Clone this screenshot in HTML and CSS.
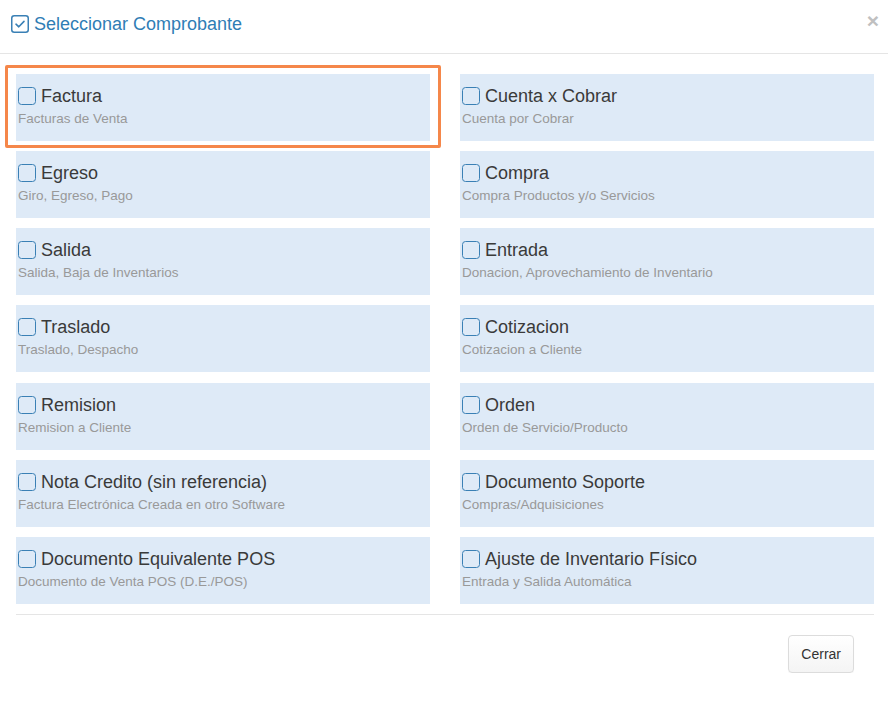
FILE: index.html
```html
<!DOCTYPE html>
<html lang="es">
<head>
<meta charset="utf-8">
<title>Seleccionar Comprobante</title>
<link rel="stylesheet" href="styles.css">
</head>
<body>
<div class="modal">
  <div class="modal-header">
    <h4 class="modal-title">
      <svg class="title-icon" width="18" height="18" viewBox="0 0 18 18" aria-hidden="true">
        <rect x="0.75" y="0.75" width="16.5" height="16.5" rx="2.5" fill="none" stroke="#3a80b5" stroke-width="1.5"/>
        <path d="M5 9.2 L7.8 11.8 L13 6.4" fill="none" stroke="#3a80b5" stroke-width="1.6" stroke-linecap="round" stroke-linejoin="round"/>
      </svg>
      Seleccionar Comprobante
    </h4>
    <button class="close" type="button">&times;</button>
  </div>
  <div class="modal-body">
    <div class="options">
      <div class="option highlighted"><div class="opt-title"><span class="cb"></span>Factura</div><div class="opt-sub">Facturas de Venta</div></div>
      <div class="option"><div class="opt-title"><span class="cb"></span>Cuenta x Cobrar</div><div class="opt-sub">Cuenta por Cobrar</div></div>
      <div class="option"><div class="opt-title"><span class="cb"></span>Egreso</div><div class="opt-sub">Giro, Egreso, Pago</div></div>
      <div class="option"><div class="opt-title"><span class="cb"></span>Compra</div><div class="opt-sub">Compra Productos y/o Servicios</div></div>
      <div class="option"><div class="opt-title"><span class="cb"></span>Salida</div><div class="opt-sub">Salida, Baja de Inventarios</div></div>
      <div class="option"><div class="opt-title"><span class="cb"></span>Entrada</div><div class="opt-sub">Donacion, Aprovechamiento de Inventario</div></div>
      <div class="option"><div class="opt-title"><span class="cb"></span>Traslado</div><div class="opt-sub">Traslado, Despacho</div></div>
      <div class="option"><div class="opt-title"><span class="cb"></span>Cotizacion</div><div class="opt-sub">Cotizacion a Cliente</div></div>
      <div class="option"><div class="opt-title"><span class="cb"></span>Remision</div><div class="opt-sub">Remision a Cliente</div></div>
      <div class="option"><div class="opt-title"><span class="cb"></span>Orden</div><div class="opt-sub">Orden de Servicio/Producto</div></div>
      <div class="option"><div class="opt-title"><span class="cb"></span>Nota Credito (sin referencia)</div><div class="opt-sub">Factura Electrónica Creada en otro Software</div></div>
      <div class="option"><div class="opt-title"><span class="cb"></span>Documento Soporte</div><div class="opt-sub">Compras/Adquisiciones</div></div>
      <div class="option"><div class="opt-title"><span class="cb"></span>Documento Equivalente POS</div><div class="opt-sub">Documento de Venta POS (D.E./POS)</div></div>
      <div class="option"><div class="opt-title"><span class="cb"></span>Ajuste de Inventario Físico</div><div class="opt-sub">Entrada y Salida Automática</div></div>
    </div>
  </div>
  <div class="modal-footer">
    <button class="btn" type="button">Cerrar</button>
  </div>
</div>
</body>
</html>
```
FILE: styles.css
```css
* { box-sizing: border-box; }
html, body {
  margin: 0;
  padding: 0;
  background: #fff;
  font-family: "Liberation Sans", Arial, Helvetica, sans-serif;
  color: #333;
}
.modal {
  width: 888px;
}
.modal-header {
  height: 54px;
  border-bottom: 1px solid #e5e5e5;
  display: flex;
  align-items: flex-start;
  justify-content: space-between;
  padding: 0 9px 0 11px;
}
.modal-title {
  margin: 0;
  padding-top: 11px;
  font-size: 18px;
  font-weight: normal;
  line-height: 26px;
  color: #2f7db5;
  display: flex;
  align-items: center;
  gap: 5px;
}
.title-icon {
  display: block;
  margin-top: -1px;
}
.close {
  border: 0;
  background: none;
  padding: 0;
  margin-top: 10px;
  font-family: "Liberation Sans", Arial, sans-serif;
  font-size: 21px;
  font-weight: bold;
  line-height: 21px;
  color: #c0c0c0;
  cursor: pointer;
}
.modal-body {
  padding: 20px 14px 0 16px;
}
.options {
  display: grid;
  grid-template-columns: 1fr 1fr;
  column-gap: 30px;
  row-gap: 10.17px;
}
.option {
  position: relative;
  height: 67px;
  background: #deeaf7;
  padding: 9px 2px 0 2px;
}
.option.highlighted::after {
  content: "";
  position: absolute;
  left: -11px;
  top: -9px;
  right: -11px;
  bottom: -7px;
  border: 3px solid #f5874a;
  border-radius: 2px;
  pointer-events: none;
}
.opt-title {
  display: flex;
  align-items: center;
  font-size: 18px;
  line-height: 26px;
  color: #3a3a3a;
}
.cb {
  display: inline-block;
  width: 18px;
  height: 18px;
  border: 1.5px solid #3a80b5;
  border-radius: 3.5px;
  margin-right: 5px;
  flex: none;
}
.opt-sub {
  font-size: 13.5px;
  line-height: 19px;
  color: #999;
}
.modal-footer {
  margin: 10px 14px 0 16px;
  border-top: 1px solid #e5e5e5;
  padding: 20px 20px 0 0;
  display: flex;
  justify-content: flex-end;
}
.btn {
  font-family: "Liberation Sans", Arial, sans-serif;
  font-size: 14px;
  line-height: 20px;
  color: #333;
  padding: 8px 12px;
  height: 38px;
  border: 1px solid #dcdcdc;
  border-radius: 4px;
  background: linear-gradient(#ffffff, #f4f4f4);
  box-shadow: 0 1px 1px rgba(0,0,0,0.04);
  cursor: pointer;
}
```
